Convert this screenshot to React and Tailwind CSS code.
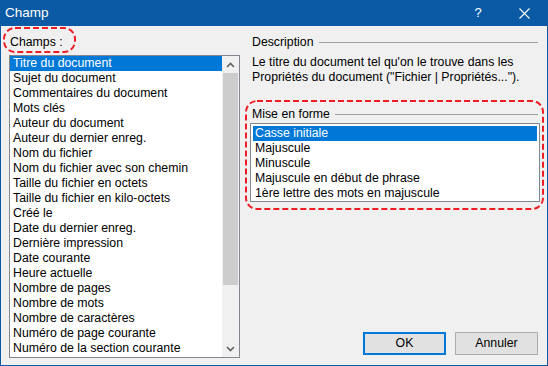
import { useMemo } from 'react';

const FIELDS = [
  "Titre du document",
  "Sujet du document",
  "Commentaires du document",
  "Mots clés",
  "Auteur du document",
  "Auteur du dernier enreg.",
  "Nom du fichier",
  "Nom du fichier avec son chemin",
  "Taille du fichier en octets",
  "Taille du fichier en kilo-octets",
  "Créé le",
  "Date du dernier enreg.",
  "Dernière impression",
  "Date courante",
  "Heure actuelle",
  "Nombre de pages",
  "Nombre de mots",
  "Nombre de caractères",
  "Numéro de page courante",
  "Numéro de la section courante",
];

const FORMATS = [
  "Casse initiale",
  "Majuscule",
  "Minuscule",
  "Majuscule en début de phrase",
  "1ère lettre des mots en majuscule",
];

const ListRow = ({ label, selected, inset = "pl-[3px]" }) => (
  <div className={`h-[15px] leading-[15px] whitespace-nowrap ${inset} ${selected ? "bg-[#0078d7] text-white" : "text-black"}`}>
    {label}
  </div>
);

const Chevron = ({ up }) => (
  <svg width="9" height="6" viewBox="0 0 9 6">
    <path
      d={up ? "M1 5 L4.5 1.5 L8 5" : "M1 1 L4.5 4.5 L8 1"}
      fill="none"
      stroke="#606060"
      strokeWidth="1.6"
    />
  </svg>
);

// red annotation ring drawn on top of the dialog
const DashedRing = ({ className, w, h }) => (
  <svg className={`pointer-events-none absolute ${className}`} width={w} height={h}>
    <rect
      x="1" y="1" width={w - 2} height={h - 2} rx="11"
      fill="none" stroke="#ee1c25" strokeWidth="2" strokeDasharray="6 3"
    />
  </svg>
);

const FieldList = () => useMemo(() => (
  <div className="flex h-[303px] w-[231px] border border-[#828790] bg-white">
    <div className="flex-1 overflow-hidden">
      {FIELDS.map((f, i) => <ListRow key={f} label={f} selected={i === 0} />)}
    </div>
    <div className="flex w-[17px] flex-col items-center bg-[#f0f0f0]">
      <div className="flex h-[17px] items-center justify-center"><Chevron up /></div>
      <div className="h-[212px] w-[15px] bg-[#cdcdcd]" />
      <div className="flex-1" />
      <div className="flex h-[17px] items-center justify-center"><Chevron /></div>
    </div>
  </div>
), []);

const GroupHeading = ({ text, className = "" }) => (
  <div className={`flex items-center ${className}`}>
    <span className="leading-[15px]">{text}</span>
    <div className="ml-[5px] mr-[2px] h-px flex-1 bg-[#a0a0a0]" />
  </div>
);

export default function App() {
  return (
    <div
      className="flex h-[366px] w-[548px] flex-col bg-[#0b5aa6] px-px pb-px text-[12.3px] text-black"
      style={{ fontFamily: '"Liberation Sans", Arial, sans-serif' }}
    >
      <div className="flex h-[26px] shrink-0 items-center text-white">
        <span className="ml-[4px] flex-1 text-[13.5px]">Champ</span>
        <div className="flex h-full w-[46px] items-center justify-center text-[13px]">?</div>
        <div className="flex h-full w-[46px] items-center justify-center">
          <svg width="11" height="11" viewBox="0 0 11 11">
            <path d="M0.5 0.5 L10.5 10.5 M10.5 0.5 L0.5 10.5" stroke="white" strokeWidth="1.1" />
          </svg>
        </div>
      </div>

      <div className="relative flex min-h-0 flex-1 bg-[#f0f0f0] pl-[8px] pr-[7px] pb-[7px]">
        <div className="flex flex-col">
          <div className="flex h-[29px] items-center pl-[1px] pt-[3px]">Champs :</div>
          <FieldList />
        </div>

        <div className="ml-[10px] flex flex-1 flex-col">
          <GroupHeading text="Description" className="h-[29px] pl-[2px] pt-[3px]" />
          <div className="pl-[2px] leading-[15px]">
            <div>Le titre du document tel qu'on le trouve dans les</div>
            <div>Propriétés du document ("Fichier | Propriétés...").</div>
          </div>
          <GroupHeading text="Mise en forme" className="mt-[21px] h-[16px] pl-[2px]" />
          <div className="mt-px h-[79px] border border-[#828790] bg-white px-[2px] pt-[2px]">
            {FORMATS.map((f, i) => <ListRow key={f} label={f} selected={i === 0} inset="pl-[2px]" />)}
          </div>
          <div className="mt-auto mb-[3px] flex justify-end gap-[9px] pr-[2px]">
            <button className="h-[23px] w-[83px] border-2 border-[#0078d7] bg-[#e1e1e1]">OK</button>
            <button className="h-[23px] w-[83px] border border-[#adadad] bg-[#e1e1e1]">Annuler</button>
          </div>
        </div>

        <DashedRing className="left-[2px] top-[1px]" w={73} h={26} />
        <DashedRing className="left-[244px] top-[74px]" w={299} h={110} />
      </div>
    </div>
  );
}
